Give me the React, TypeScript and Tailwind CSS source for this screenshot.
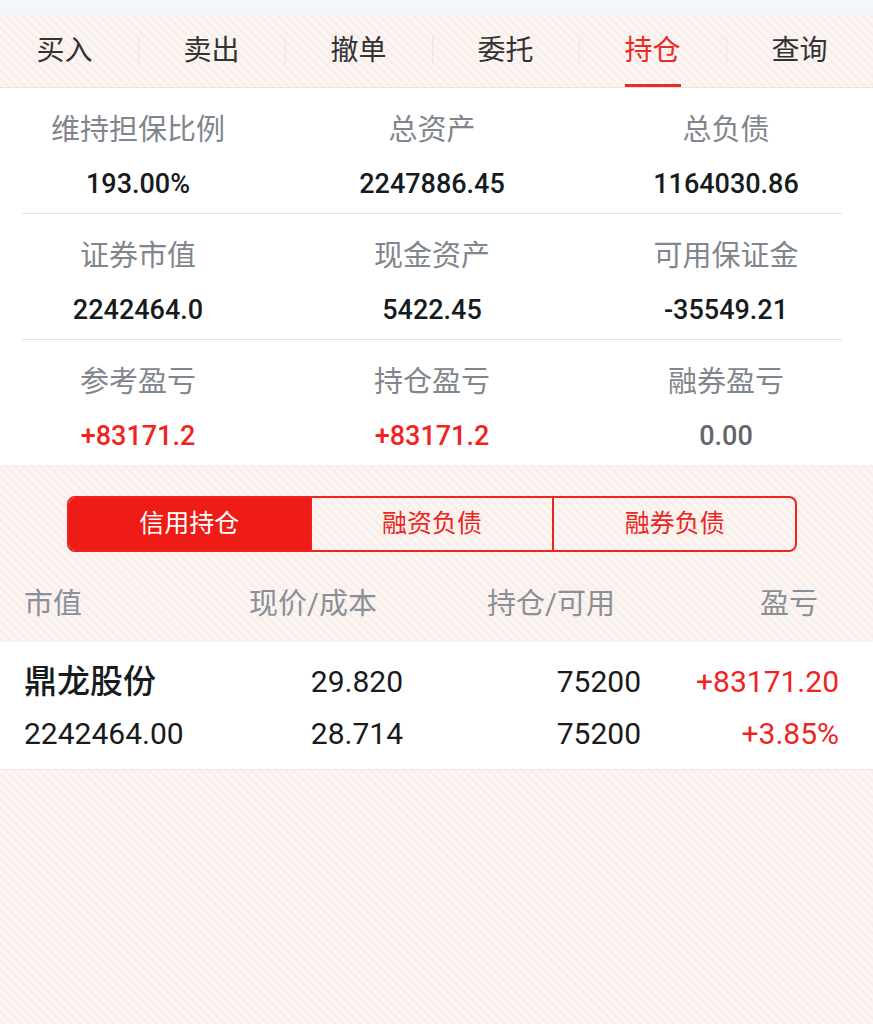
import React from "react";

const tabs = ["买入", "卖出", "撤单", "委托", "持仓", "查询"];

interface Cell {
  label: string;
  value: string;
  tone?: "up" | "plain" | "muted";
}

const summary: Cell[][] = [
  [
    { label: "维持担保比例", value: "193.00%" },
    { label: "总资产", value: "2247886.45" },
    { label: "总负债", value: "1164030.86" },
  ],
  [
    { label: "证券市值", value: "2242464.0" },
    { label: "现金资产", value: "5422.45" },
    { label: "可用保证金", value: "-35549.21" },
  ],
  [
    { label: "参考盈亏", value: "+83171.2", tone: "up" },
    { label: "持仓盈亏", value: "+83171.2", tone: "up" },
    { label: "融券盈亏", value: "0.00", tone: "muted" },
  ],
];

const segments = ["信用持仓", "融资负债", "融券负债"];

export default function App() {
  return (
    <div className="min-h-[1024px] w-[873px] overflow-hidden bg-[#fdf7f4] bg-[image:repeating-linear-gradient(45deg,#fdf7f4_0px,#f7ede9_3px,#fdf7f4_6px)] font-['Roboto','Noto_Sans_CJK_SC',sans-serif]">
      <div className="-ml-[9px] w-[882px]">
        {/* top strip */}
        <div className="ml-[9px] h-[14px] bg-[#f3f6fa]" />

        {/* tabs */}
        <div className="flex h-[74px] border-b border-[#e3e3e3]">
          {tabs.map((t, i) => (
            <div key={t} className="relative flex w-[147px] items-center justify-center">
              {i > 0 && <span className="absolute left-0 top-[23px] h-[28px] w-px bg-[#ece5e2]" />}
              <span
                className={`text-[28px] leading-none ${t === "持仓" ? "text-[#ea2a25]" : "text-[#333333]"}`}
              >
                {t}
              </span>
              {t === "持仓" && (
                <span className="absolute bottom-0 left-1/2 h-[3px] w-[56px] -translate-x-1/2 bg-[#ea2a25]" />
              )}
            </div>
          ))}
        </div>

        {/* summary */}
        <div className="bg-white">
          {summary.map((row, ri) => (
            <div key={ri}>
              {ri > 0 && <div className="mx-[31px] h-px bg-[#e2e2e2]" />}
              <div className="grid h-[125px] grid-cols-3">
                {row.map((c) => (
                  <div key={c.label} className="flex flex-col items-center pt-[24px]">
                    <span className="h-[36px] text-[29px] leading-[36px] text-[#80868c]">{c.label}</span>
                    <span
                      className={`mt-[18px] h-[36px] text-[27px] font-medium leading-[36px] ${
                        c.tone === "up"
                          ? "text-[#f0231e]"
                          : c.tone === "muted"
                          ? "text-[#60666c]"
                          : "text-[#161b20]"
                      }`}
                    >
                      {c.value}
                    </span>
                  </div>
                ))}
              </div>
            </div>
          ))}
        </div>

        {/* segmented control */}
        <div className="px-[76px] pt-[31px]">
          <div className="flex h-[56px] overflow-hidden rounded-[8px] border-2 border-[#ec2520]">
            {segments.map((s, i) => (
              <div
                key={s}
                className={`flex flex-1 items-center justify-center text-[25px] ${
                  i === 0 ? "bg-[#ef1b16] text-white" : "border-l-2 border-[#ec2520] text-[#ec2520]"
                }`}
              >
                {s}
              </div>
            ))}
          </div>
        </div>

        {/* table header */}
        <div className="grid h-[90px] grid-cols-[200px_179px_238px_198px] items-center pl-[33px] pt-[16px] text-[29px] text-[#8a9096]">
          <span>市值</span>
          <span className="pr-[26px] text-right">现价/成本</span>
          <span className="pr-[26px] text-right">持仓/可用</span>
          <span className="pr-[21px] text-right">盈亏</span>
        </div>

        {/* position row */}
        <div className="ml-[9px] border-b border-[#e9e9e9] bg-white">
          <div className="-ml-[9px] grid grid-cols-[200px_179px_238px_198px] pb-[15px] pl-[33px] pt-[20px] text-[30px] leading-[40px] text-[#161b20]">
            <span className="text-[33px] font-medium">鼎龙股份</span>
            <span className="text-right">29.820</span>
            <span className="text-right">75200</span>
            <span className="text-right text-[#f0231e]">+83171.20</span>
            <span className="mt-[12px]">2242464.00</span>
            <span className="mt-[12px] text-right">28.714</span>
            <span className="mt-[12px] text-right">75200</span>
            <span className="mt-[12px] text-right text-[#f0231e]">+3.85%</span>
          </div>
        </div>
      </div>
    </div>
  );
}
